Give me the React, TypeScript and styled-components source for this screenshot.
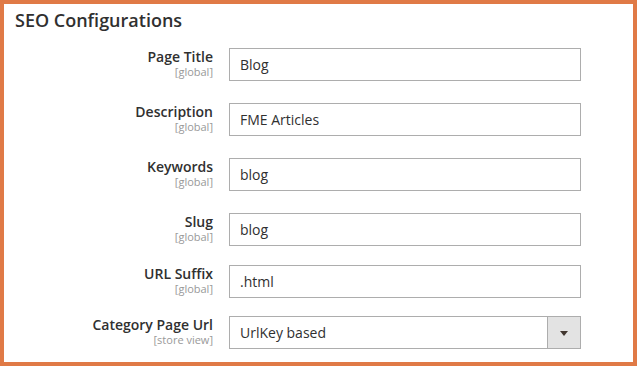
import React from "react";
import styled, { createGlobalStyle } from "styled-components";

const Global = createGlobalStyle`
  html, body { margin: 0; padding: 0; background: #ffffff; }
  body { font-family: "Open Sans", "Liberation Sans", sans-serif; }
  * { box-sizing: border-box; }
`;

const Frame = styled.div`
  width: 637px;
  height: 366px;
  border: 4px solid #e07a46;
  background: #ffffff;
  padding: 6px 0 0 11px;
  overflow: hidden;
`;

const Title = styled.h2`
  margin: 0;
  font-family: "Open Sans", "Liberation Sans", sans-serif;
  font-size: 18px;
  line-height: 20px;
  font-weight: 600;
  color: #303030;
`;

const Form = styled.div`
  display: grid;
  grid-template-columns: 198px 352px;
  column-gap: 16px;
  margin-top: 18px;
`;

const LabelCell = styled.div<{ $space: number }>`
  display: flex;
  flex-direction: column;
  align-items: flex-end;
  padding-top: 1px;
  margin-bottom: ${(p) => p.$space}px;
`;

const LabelText = styled.span`
  font-size: 14px;
  line-height: 16px;
  font-weight: 600;
  color: #303030;
`;

const Scope = styled.span`
  font-size: 11px;
  line-height: 13px;
  color: #999999;
`;

const Field = styled.div<{ $space: number }>`
  height: 33px;
  border: 1px solid #adadad;
  background: #ffffff;
  display: flex;
  align-items: center;
  padding-left: 10px;
  font-size: 14px;
  color: #303030;
  margin-bottom: ${(p) => p.$space}px;
`;

const SelectBox = styled(Field)`
  padding-left: 0;
  justify-content: space-between;
`;

const SelectValue = styled.span`
  padding-left: 10px;
`;

const SelectButton = styled.div`
  width: 33px;
  height: 100%;
  background: #e3e3e3;
  border-left: 1px solid #adadad;
  display: flex;
  align-items: center;
  justify-content: center;
`;

const Arrow = styled.span`
  width: 0;
  height: 0;
  border-left: 4px solid transparent;
  border-right: 4px solid transparent;
  border-top: 5px solid #41362f;
  margin-top: 1px;
`;

const rows = [
  { label: "Page Title", scope: "[global]", value: "Blog", space: 22 },
  { label: "Description", scope: "[global]", value: "FME Articles", space: 22 },
  { label: "Keywords", scope: "[global]", value: "blog", space: 22 },
  { label: "Slug", scope: "[global]", value: "blog", space: 19 },
  { label: "URL Suffix", scope: "[global]", value: ".html", space: 18 },
];

export default function App() {
  return (
    <>
      <Global />
      <Frame>
        <Title>SEO Configurations</Title>
        <Form>
          {rows.map((r) => (
            <React.Fragment key={r.label}>
              <LabelCell $space={r.space}>
                <LabelText>{r.label}</LabelText>
                <Scope>{r.scope}</Scope>
              </LabelCell>
              <Field $space={r.space}>{r.value}</Field>
            </React.Fragment>
          ))}
          <LabelCell $space={0}>
            <LabelText>Category Page Url</LabelText>
            <Scope>[store view]</Scope>
          </LabelCell>
          <SelectBox $space={0}>
            <SelectValue>UrlKey based</SelectValue>
            <SelectButton>
              <Arrow />
            </SelectButton>
          </SelectBox>
        </Form>
      </Frame>
    </>
  );
}
